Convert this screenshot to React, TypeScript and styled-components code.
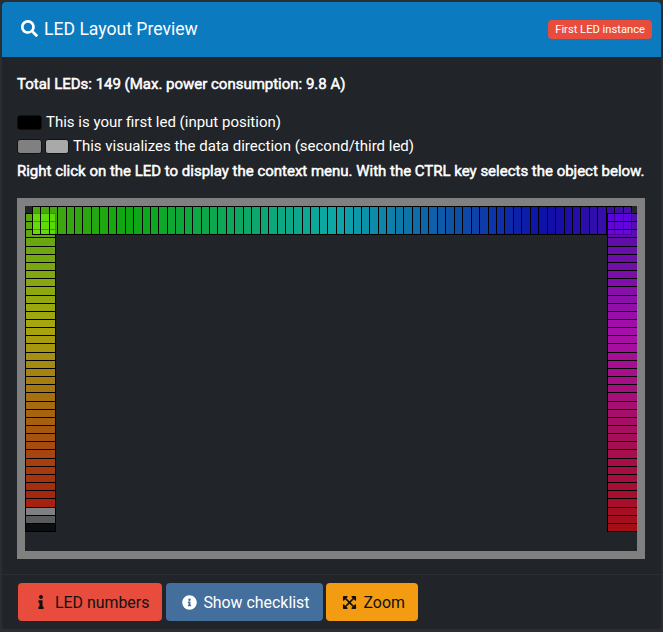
import styled, { createGlobalStyle } from 'styled-components';
import { FaSearch, FaInfo, FaInfoCircle, FaExpandArrowsAlt } from 'react-icons/fa';

const GlobalStyle = createGlobalStyle`
  html, body {
    margin: 0;
    padding: 0;
    background: #2a2e33;
  }
  body {
    width: 663px;
    height: 632px;
    overflow: hidden;
    font-family: Roboto, "Liberation Sans", sans-serif;
  }
`;

const Card = styled.div`
  box-sizing: border-box;
  width: 659px;
  height: 627px;
  margin: 2px 0 0 2px;
  display: flex;
  flex-direction: column;
  background: #212429;
  border-radius: 4px;
  overflow: hidden;
`;

const Header = styled.div`
  box-sizing: border-box;
  height: 55px;
  padding: 0 9px 0 19px;
  display: flex;
  align-items: center;
  justify-content: space-between;
  background: #0c7abf;
  color: #fff;
`;

const Title = styled.h3`
  margin: 0 0 2px;
  display: flex;
  align-items: center;
  gap: 6px;
  font-size: 17.6px;
  line-height: 22px;
  font-weight: 400;
`;

const Badge = styled.span`
  padding: 3px 7px;
  font-size: 11.2px;
  line-height: 13px;
  font-weight: 400;
  color: #fff;
  background: #e74c3c;
  border-radius: 4px;
`;

const Body = styled.div`
  flex: 1;
  padding: 17px 15px 0;
  color: #fff;
  font-size: 15px;
  line-height: 20px;
`;

const Strong = styled.div<{ $gap?: number }>`
  font-weight: 400;
  letter-spacing: -0.01px;
  -webkit-text-stroke: 0.5px #fff;
  margin-bottom: ${(p) => p.$gap ?? 0}px;
  white-space: nowrap;
`;

const LegendRow = styled.div<{ $gap?: number }>`
  height: 24px;
  margin-bottom: ${(p) => p.$gap ?? 0}px;
  display: flex;
  align-items: center;
  gap: 3px;
`;

const LegendText = styled.span`
  margin-left: 1px;
`;

const Swatch = styled.span<{ $color: string; $w: number }>`
  box-sizing: border-box;
  width: ${(p) => p.$w}px;
  height: 15px;
  background: ${(p) => p.$color};
  border: 1px solid #111;
  border-radius: 3px;
`;

const Frame = styled.div`
  box-sizing: border-box;
  width: 628px;
  height: 361px;
  margin-top: 17px;
  border: 8px solid #808080;
`;

const Footer = styled.div`
  box-sizing: border-box;
  height: 55px;
  padding: 8px 16px 0;
  display: flex;
  gap: 4px;
  border-top: 1px solid #2b2f34;
`;

const Button = styled.button<{ $bg: string; $fg: string }>`
  box-sizing: border-box;
  height: 38px;
  padding: 0 13px;
  display: flex;
  align-items: center;
  gap: 4px;
  font-family: inherit;
  font-size: 15.9px;
  color: ${(p) => p.$fg};
  background: ${(p) => p.$bg};
  border: none;
  border-radius: 4px;
`;

const ZoomButton = styled(Button)`
  margin-left: -1px;
  padding-left: 14px;
`;

const IconSlot = styled.span`
  width: 20px;
  display: flex;
  justify-content: center;
`;

// led strip: up the left side, along the top, down the right side
const TOTAL = 149;
const SIDE = 39;
const TOP = 71;

function ledColor(i: number) {
  if (i === 0) return '#000';
  if (i === 1) return '#808080';
  if (i === 2) return '#bebebe';
  return `hsl(${(i * 360) / TOTAL}, 100%, 50%)`;
}

function getLedRect(i: number) {
  const colPitch = 8.154;
  const rowPitch = 8.44;
  if (i < SIDE) {
    return { x: 0.5, y: 325.5 - (i + 1) * colPitch, w: 29.5, h: colPitch };
  }
  if (i < SIDE + TOP) {
    return { x: 7.3 + (i - SIDE) * rowPitch, y: 0.5, w: rowPitch, h: 28 };
  }
  return { x: 582.3, y: 7.5 + (i - SIDE - TOP) * colPitch, w: 30, h: colPitch };
}

function LedMatrix() {
  const leds = Array.from({ length: TOTAL }, (_, i) => i);
  return (
    <svg width="612" height="345" style={{ display: 'block' }}>
      {leds.map((i) => {
        const r = getLedRect(i);
        return (
          <rect
            key={i}
            x={r.x}
            y={r.y}
            width={r.w}
            height={r.h}
            fill={ledColor(i)}
            fillOpacity={0.6}
            stroke="#000"
            strokeWidth={1}
            shapeRendering="crispEdges"
          />
        );
      })}
    </svg>
  );
}

export default function App() {
  return (
    <>
      <GlobalStyle />
      <Card>
        <Header>
          <Title>
            <FaSearch size={17} />
            LED Layout Preview
          </Title>
          <Badge>First LED instance</Badge>
        </Header>
        <Body>
          <Strong $gap={16}>Total LEDs: 149 (Max. power consumption: 9.8 A)</Strong>
          <LegendRow>
            <Swatch $color="#000" $w={25} />
            <LegendText>This is your first led (input position)</LegendText>
          </LegendRow>
          <LegendRow $gap={3}>
            <Swatch $color="#808080" $w={25} />
            <Swatch $color="#a9a9a9" $w={24} />
            <LegendText>This visualizes the data direction (second/third led)</LegendText>
          </LegendRow>
          <Strong>Right click on the LED to display the context menu. With the CTRL key selects the object below.</Strong>
          <Frame>
            <LedMatrix />
          </Frame>
        </Body>
        <Footer>
          <Button $bg="#e74c3c" $fg="#111">
            <IconSlot><FaInfo size={14} /></IconSlot>
            LED numbers
          </Button>
          <Button $bg="#446e9b" $fg="#fff">
            <IconSlot><FaInfoCircle size={15} /></IconSlot>
            Show checklist
          </Button>
          <ZoomButton $bg="#f39c12" $fg="#111">
            <IconSlot><FaExpandArrowsAlt size={15} /></IconSlot>
            Zoom
          </ZoomButton>
        </Footer>
      </Card>
    </>
  );
}
